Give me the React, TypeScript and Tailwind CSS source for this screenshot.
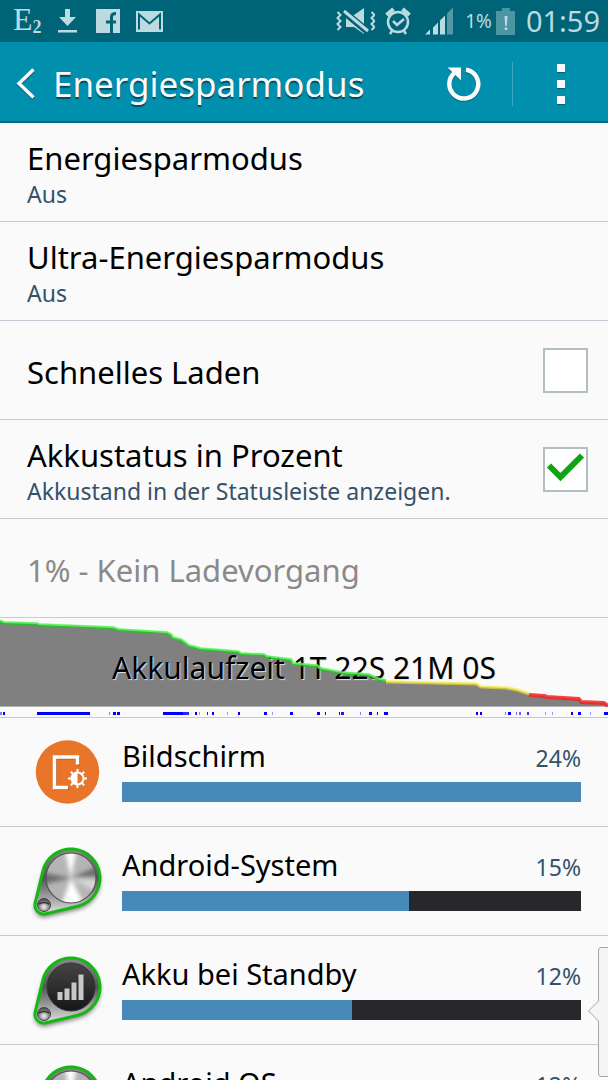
import { useState } from "react";
import type { ReactNode } from "react";

type AppIcon = "display" | "metal" | "signal";

interface Usage {
  name: string;
  percent: number;
  icon: AppIcon;
}

const usages: Usage[] = [
  { name: "Bildschirm", percent: 24, icon: "display" },
  { name: "Android-System", percent: 15, icon: "metal" },
  { name: "Akku bei Standby", percent: 12, icon: "signal" },
  { name: "Android OS", percent: 12, icon: "metal" },
];

const GREEN_LINE =
  "0,3 4,5 37,6 39,7 113,10 119,12 167,15 171,17 173,20 181,22 185,25 189,28 197,30 200,31 238,34 241,36 264,37 267,39 291,42 293,46 304,47 317,48 321,51 342,55 369,57 377,61 386,63";
const YELLOW_LINE = "386,64 476,66 481,69 506,70 517,72 529,76";
const RED_LINE = "529,77 544,78 547,79 579,81 581,84 604,85 608,88";

// [x, width, opacity] of each wake period below the graph
const wakeTicks: [number, number, number][] = [
  [0, 2, 0.5], [3, 2, 1], [37, 53, 1], [109, 1, 0.5], [113, 3, 1], [117, 3, 1],
  [163, 20, 1], [183, 6, 0.85], [195, 2, 1], [199, 1, 0.4], [207, 1, 0.9],
  [212, 2, 1], [227, 1, 0.4], [238, 2, 1], [264, 3, 1], [272, 1, 0.4],
  [290, 3, 1], [317, 3, 1], [325, 1, 1], [339, 1, 1], [341, 3, 0.9],
  [360, 1, 0.5], [369, 3, 1], [377, 1, 1], [384, 4, 1], [476, 2, 1],
  [480, 2, 1], [505, 1, 0.5], [508, 3, 1], [516, 1, 0.6], [519, 2, 0.6],
  [527, 2, 0.8], [545, 1, 0.4], [552, 1, 0.4], [571, 2, 1], [578, 3, 1],
  [590, 1, 0.4], [604, 4, 1],
];

function StatusBar() {
  return (
    <div className="flex h-[42px] items-center justify-between bg-[#006478] pr-2 pl-[13px] text-[#bcdadf]">
      <div className="flex items-center gap-4">
        <span className="flex h-8 w-7 items-start font-['Liberation_Serif',serif] text-[32px] leading-7">
          E<sub className="bottom-0 self-end text-lg leading-5 font-bold">2</sub>
        </span>
        <svg className="h-[26px] w-[23px]" viewBox="0 0 23 26" fill="currentColor">
          <path d="M8 1h5v8h6l-8.500 9L2 9h6zM1 22h19v2.500H1z" />
        </svg>
        <svg className="h-6 w-6" viewBox="0 0 24 24">
          <path d="M0 0h24v24H0z" fill="currentColor" />
          <path d="M15.500 24V8q0-3.500 4.500-3.500M10 13h10" fill="none" stroke="#006478" strokeWidth="3" />
        </svg>
        <svg className="h-[21px] w-[27px]" viewBox="0 0 27 21">
          <path d="M0 0h27v21H0z" fill="currentColor" />
          <path d="M3 18.500V3.500l10.500 9 10.500-9v15" fill="none" stroke="#006478" strokeWidth="2" />
        </svg>
      </div>
      <div className="flex items-center gap-2.5">
        <svg className="h-[26px] w-10" viewBox="0 0 40 26" fill="none" stroke="currentColor">
          <path d="M11 7h8l10-7v26l-10-7h-8z" fill="currentColor" stroke="none" />
          <path d="M8 3l24 20" stroke="#006478" strokeWidth="7" />
          <path d="M9 3l24 20" strokeWidth="3" />
          <path d="M2.500 4l3 3-3 3 3 3-3 3 3 3-3 3M36.500 4l3 3-3 3 3 3-3 3 3 3-3 3" strokeWidth="2" />
        </svg>
        <svg className="h-7 w-[30px]" viewBox="0 0 30 28" fill="none" stroke="currentColor">
          <circle cx="13" cy="15" r="10" strokeWidth="2.500" />
          <path d="M8 14l4 4 7-6" strokeWidth="2.500" />
          <path d="M1.500 8l7-6M24.500 8l-7-6" strokeWidth="4" />
          <path d="M7 24l-2 3M19 24l2 3" strokeWidth="2.500" />
        </svg>
        <svg className="h-7 w-[30px]" viewBox="0 0 30 28" fill="currentColor">
          <path d="M0 27.500l5-5v5zM8 20.500l5-5v12H8zM15 13.500l5-5v19h-5z" />
          <path d="M22 6.500l6-6v27h-6z" opacity=".45" />
        </svg>
        <div className="flex items-center gap-1">
          <span className="text-[19px] leading-6">1%</span>
          <svg className="h-[27px] w-5" viewBox="0 0 20 27">
            <path d="M6 0h8v3h5v24H0V3h6z" fill="#4e95a2" />
            <path d="M8.500 8h3l-.7 10H9.200zM8.700 19.500h2.600V22H8.700z" fill="#bcdadf" />
          </svg>
        </div>
        <span className="text-[29px] leading-8">01:59</span>
      </div>
    </div>
  );
}

function ActionBar() {
  return (
    <header className="flex h-[81px] items-center border-b-2 border-[#006a87] bg-[#0090ae] pt-1 text-[#fafafa]">
      <button className="flex flex-1 items-center gap-[18px] pl-4 text-left text-[35px] leading-12 [text-shadow:0_2px_1px_#004b60]">
        <svg className="h-8 w-[19px] drop-shadow-[0_1px_0_#004b60]" viewBox="0 0 19 32" fill="none" stroke="currentColor" strokeWidth="3.500">
          <path d="M17.500 1.500L3 15.500l14.500 14" />
        </svg>
        <h1>Energiesparmodus</h1>
      </button>
      <button className="flex w-24 justify-center" aria-label="Aktualisieren">
        <svg className="h-9 w-9 drop-shadow-[0_1px_0_#00617a]" viewBox="0 0 36 36">
          <path d="M20 3.700A14.500 14.500 0 1 1 9 6.500" fill="none" stroke="currentColor" strokeWidth="4.500" />
          <path d="M1.500 1.500H15v13z" fill="currentColor" />
        </svg>
      </button>
      <div className="h-11 w-px bg-[#3aa9c1]" />
      <button className="flex h-full w-[95px] items-center justify-center" aria-label="Menü">
        <span className="flex flex-col gap-2">
          <i className="h-2 w-2 bg-current shadow-[0_1px_0_#00617a]" />
          <i className="h-2 w-2 bg-current shadow-[0_1px_0_#00617a]" />
          <i className="h-2 w-2 bg-current shadow-[0_1px_0_#00617a]" />
        </span>
      </button>
    </header>
  );
}

interface SettingProps {
  title: string;
  summary?: string;
  children?: ReactNode;
}

function SettingText({ title, summary }: SettingProps) {
  return (
    <span className="flex flex-1 flex-col pt-[3px]">
      <span className="text-[31px] leading-10">{title}</span>
      {summary && <span className="text-[23px] leading-8 text-[#34526b]">{summary}</span>}
    </span>
  );
}

function SettingLink({ title, summary }: SettingProps) {
  return (
    <button className="flex h-[99px] w-full items-center border-b border-[#c3ccd5] px-[27px] text-left">
      <SettingText title={title} summary={summary} />
    </button>
  );
}

function SettingCheck({ title, summary, initial }: SettingProps & { initial: boolean }) {
  const [checked, setChecked] = useState(initial);

  return (
    <label className="flex h-[99px] items-center border-b border-[#c3ccd5] pr-5 pl-[27px]">
      <SettingText title={title} summary={summary} />
      <span className="relative h-[45px] w-[45px]">
        <input
          type="checkbox"
          checked={checked}
          onChange={(e) => setChecked(e.target.checked)}
          className="block h-full w-full appearance-none border-2 border-[#b3bec0] bg-white"
        />
        {checked && (
          <svg className="pointer-events-none absolute inset-0" viewBox="0 0 45 45" fill="none">
            <path d="M6 18.500l11.500 11.500L39 8.500" stroke="#12a312" strokeWidth="6" />
          </svg>
        )}
      </span>
    </label>
  );
}

function BatteryGraph() {
  return (
    <button className="relative block h-[100px] w-full border-b border-[#c3ccd5]">
      <svg className="absolute inset-0 h-[99px] w-full" viewBox="0 0 608 99" preserveAspectRatio="none">
        <polygon points={`0,88 ${GREEN_LINE} ${YELLOW_LINE} ${RED_LINE}`} fill="#808080" />
        <path d="M0 88.500h608" stroke="#b5b5b5" />
        {wakeTicks.map(([x, width, opacity]) => (
          <rect key={x} x={x} y="94" width={width} height="3" fill="#0000ff" opacity={opacity} />
        ))}
      </svg>
      <span className="relative block text-center text-[30px] leading-10 text-black [text-shadow:1px_1px_1px_#e5e5e5]">
        Akkulaufzeit 1T 22S 21M 0S
      </span>
      <svg className="absolute inset-0 h-[99px] w-full" viewBox="0 0 608 99" preserveAspectRatio="none" fill="none">
        <g strokeWidth="3" opacity=".85" strokeLinejoin="round">
          <polyline points={GREEN_LINE} stroke="#22c522" />
          <polyline points={YELLOW_LINE} stroke="#d8cb3a" />
          <polyline points={RED_LINE} stroke="#f52222" strokeWidth="4" />
        </g>
        <g strokeWidth="2" opacity=".6" transform="translate(0 -1)">
          <polyline points={GREEN_LINE} stroke="#7dff7d" />
          <polyline points={YELLOW_LINE} stroke="#ffff80" />
        </g>
      </svg>
    </button>
  );
}

function DisplayIcon() {
  return (
    <svg className="h-[76px] w-[72px]" viewBox="0 0 72 76">
      <circle cx="35.500" cy="36" r="31.700" fill="#e87529" />
      <g fill="none" stroke="#b9581b" strokeWidth="3" transform="translate(1 1)">
        <path d="M45.500 28.500V21H22.500v30.500H36" />
      </g>
      <g fill="none" stroke="#fff" strokeWidth="3.500">
        <path d="M45.500 28.500V21H22.500v30.500H36" />
        <circle cx="45.500" cy="42.500" r="6" strokeWidth="2" />
        <path
          d="M45.500 33v3M45.500 49v3M36 42.500h3M52 42.500h3M38.800 35.800l2 2M50.200 47.200l2 2M52.200 35.800l-2 2M40.800 47.200l-2 2"
          strokeWidth="2"
        />
      </g>
      <path d="M45.500 36.500a6 6 0 0 0 0 12z" fill="#fff" />
    </svg>
  );
}

function KnobIcon({ signal }: { signal: boolean }) {
  const outline = "M10.800 26.300A29 29 0 1 1 45.700 61.200L14.100 68.800A9 9 0 0 1 3.200 57.900Z";
  return (
    <svg className="h-[76px] w-[72px] overflow-visible" viewBox="0 0 72 76">
      <defs>
        <linearGradient id="rim" x1="0" y1="0" x2="0" y2="1">
          <stop offset="0" stopColor="#8a8a8a" />
          <stop offset=".45" stopColor="#555" />
          <stop offset="1" stopColor="#e2e2e2" />
        </linearGradient>
        <linearGradient id="dark" x1="0" y1="0" x2="0" y2="1">
          <stop offset="0" stopColor="#454545" />
          <stop offset="1" stopColor="#161616" />
        </linearGradient>
        <radialGradient id="ball" cx=".5" cy=".65" r=".6">
          <stop offset="0" stopColor="#f4f4f4" />
          <stop offset="1" stopColor="#4a4a4a" />
        </radialGradient>
        <filter id="soft" x="-20%" y="-20%" width="140%" height="140%">
          <feGaussianBlur stdDeviation="2" />
        </filter>
        <clipPath id="disc">
          <circle cx="39" cy="33" r="25" />
        </clipPath>
      </defs>
      <path d={outline} fill="#333" stroke="#333" opacity=".6" filter="url(#soft)" transform="translate(0 3)" />
      <path d={outline} fill="url(#rim)" stroke="#14b814" strokeWidth="3" />
      {signal ? (
        <>
          <circle cx="39" cy="33" r="24" fill="url(#dark)" stroke="#333" />
          <path d="M25.500 38h5v8h-5zM32.500 34.500h5V46h-5zM39.500 28.500h5V46h-5zM46.500 20.500h5V46h-5z" fill="#c8c8c8" />
        </>
      ) : (
        <>
          <g clipPath="url(#disc)">
            <circle cx="39" cy="33" r="26" fill="#b5b5b5" />
            <g filter="url(#soft)">
              <path d="M39 33L8 27v13z" fill="#6d6d6d" />
              <path d="M39 33l31-14v12z" fill="#6d6d6d" />
              <path d="M39 33L32 2h13z" fill="#fff" />
              <path d="M39 33l31 3v14z" fill="#d8d8d8" />
              <path d="M39 33l-11 31h26z" fill="#fff" />
            </g>
          </g>
          <circle cx="39" cy="33" r="25" fill="none" stroke="#555" strokeWidth="1.200" />
        </>
      )}
      <circle cx="12" cy="60" r="6.500" fill="url(#ball)" stroke="#444" />
      <path d="M7 59q5-3 10 0" fill="none" stroke="#333" strokeWidth="1.500" />
    </svg>
  );
}

function UsageRow({ name, percent, icon }: Usage) {
  const max = usages[0].percent;

  return (
    <li className="h-[109px] border-b border-[#c3ccd5]">
      <button className="flex h-full w-full items-center gap-[18px] pr-[27px] pl-8 text-left">
        <span className="pt-1">
          {icon === "display" ? <DisplayIcon /> : <KnobIcon signal={icon === "signal"} />}
        </span>
        <span className="flex flex-1 flex-col gap-1.5 pb-1.5">
          <span className="flex items-baseline justify-between">
            <span className="text-[29px] leading-10">{name}</span>
            <span className="text-[23px] leading-8 text-[#34526b]">{percent}%</span>
          </span>
          <span className="block h-5 bg-[#28272c]">
            <span
              className="block h-full bg-[#458ab8]"
              style={{ width: `${(percent / max) * 100}%` }}
            />
          </span>
        </span>
      </button>
    </li>
  );
}

export default function App() {
  return (
    <div className="relative h-screen overflow-hidden bg-[#fafafa] font-['Noto_Sans',sans-serif] text-black">
      <StatusBar />
      <ActionBar />
      <main>
        <SettingLink title="Energiesparmodus" summary="Aus" />
        <SettingLink title="Ultra-Energiesparmodus" summary="Aus" />
        <SettingCheck title="Schnelles Laden" initial={false} />
        <SettingCheck
          title="Akkustatus in Prozent"
          summary="Akkustand in der Statusleiste anzeigen."
          initial
        />
        <div className="flex h-[99px] items-center border-b border-[#c3ccd5] px-[27px] pt-[3px] text-[31px] leading-10 text-[#8a8a8a]">
          1% - Kein Ladevorgang
        </div>
        <BatteryGraph />
        <ul>
          {usages.map((usage) => (
            <UsageRow key={usage.name} {...usage} />
          ))}
        </ul>
      </main>

      {/* Edge handle */}
      <button className="absolute right-0 bottom-0 h-[134px] w-5" aria-label="Leiste öffnen">
        <svg className="h-full w-full" viewBox="0 0 20 134" fill="#f5f5f5" stroke="#a5a5a5">
          <path d="M22 1.500H13q-2.500 0-2.500 2.500v51L.5 65l10 10v53q0 2.500 2.500 2.500h9" />
        </svg>
      </button>
    </div>
  );
}
